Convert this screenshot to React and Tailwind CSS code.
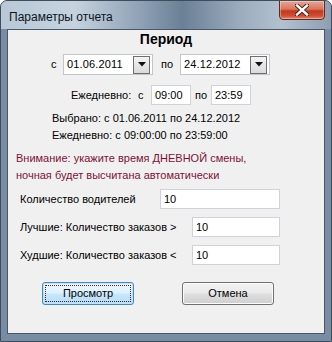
import React from 'react';

const font = { fontFamily: '"Liberation Sans", Arial, sans-serif' };

function DateBox({ value }) {
  return (
    <div className="flex h-[21px] w-[90px] items-center border border-[#c2c6cc] bg-white pl-[3px] pr-[2px]">
      <span className="flex-1 text-[11px] tracking-[0.15px] text-black">{value}</span>
      <div className="flex h-[18px] w-[17px] items-center justify-center border border-[#6f6f6f] bg-gradient-to-b from-[#f4f4f4] to-[#dadada]">
        <svg width="8" height="5" viewBox="0 0 8 5">
          <path d="M0 0h8L4 4.5z" fill="#111" />
        </svg>
      </div>
    </div>
  );
}

function Field({ value, width }) {
  return (
    <div className={`flex h-[20px] items-center border border-[#cfd3d9] bg-white pl-[3px] text-[11px] text-black ${width}`}>
      {value}
    </div>
  );
}

export default function App() {
  return (
    <div
      style={font}
      className="flex h-[342px] w-[332px] flex-col overflow-hidden rounded-t-[7px] border border-[#3f4c5a] bg-[#788ca3] text-[11px] text-black"
    >
      {/* Title bar */}
      <div className="relative h-[28px] shrink-0 bg-[linear-gradient(to_right,#b8c8d7_0%,#c6d3df_22%,#8fa2b6_42%,#6b8096_55%,#9aabbd_72%,#b3c1cf_85%,#8d9fb3_100%)]">
        <span className="absolute left-[8px] top-[7px] text-[12px] text-[#0b1520]">Параметры отчета</span>
        <div className="absolute right-[6px] top-[-1px] flex h-[20px] w-[46px] items-center justify-center rounded-b-[4px] border border-[#5e2a22] bg-[linear-gradient(to_bottom,#e9a593_0%,#d9765f_45%,#c2391f_55%,#cf4a30_80%,#e0846b_100%)] shadow-[inset_0_0_0_1px_rgba(255,255,255,0.35)]">
          <svg width="14" height="12" viewBox="0 0 14 12">
            <path d="M2 1.5L12 10.5M12 1.5L2 10.5" stroke="#3a1a16" strokeWidth="4.2" strokeLinecap="square" />
            <path d="M2 1.5L12 10.5M12 1.5L2 10.5" stroke="#ffffff" strokeWidth="2.4" strokeLinecap="square" />
          </svg>
        </div>
      </div>

      {/* Client area */}
      <div className="flex flex-1 px-[6px] pb-[7px]">
        <div className="flex flex-1 flex-col border border-[#4a5866] bg-[#f0f0f0]">
          <div className="flex h-[18px] items-center justify-center pt-[1px] text-[14px] font-bold">Период</div>

          <div className="ml-[43px] mt-[6px] flex items-center">
            <span className="w-[12px]">с</span>
            <DateBox value="01.06.2011" />
            <span className="ml-[8px] w-[19px]">по</span>
            <DateBox value="24.12.2012" />
          </div>

          <div className="ml-[63px] mt-[10px] flex items-center">
            <span className="w-[67px]">Ежедневно:</span>
            <span className="w-[13px]">с</span>
            <Field value="09:00" width="w-[40px]" />
            <span className="ml-[4px] w-[16px]">по</span>
            <Field value="23:59" width="w-[40px]" />
          </div>

          <div className="ml-[44px] mt-[5px] h-[17px] leading-[17px]">Выбрано: с 01.06.2011 по 24.12.2012</div>
          <div className="ml-[44px] h-[17px] leading-[17px]">Ежедневно: с 09:00:00 по 23:59:00</div>

          <div className="ml-[8px] mt-[6px] text-[#7f1137] leading-[17px]">
            <div>Внимание: укажите время ДНЕВНОЙ смены,</div>
            <div>ночная будет высчитана автоматически</div>
          </div>

          <div className="ml-[12px] mt-[5px] flex items-center">
            <span className="w-[140px]">Количество водителей</span>
            <Field value="10" width="w-[120px]" />
          </div>
          <div className="ml-[12px] mt-[8px] flex items-center">
            <span className="w-[172px]">Лучшие: Количество заказов &gt;</span>
            <Field value="10" width="w-[88px]" />
          </div>
          <div className="ml-[12px] mt-[8px] flex items-center">
            <span className="w-[172px]">Худшие: Количество заказов &lt;</span>
            <Field value="10" width="w-[88px]" />
          </div>

          <div className="ml-[34px] mt-[17px] flex gap-[48px]">
            <button className="flex h-[23px] w-[92px] items-center justify-center rounded-[3px] border border-[#3c8bc7] bg-[linear-gradient(to_bottom,#edf7fd_0%,#e0f1fc_45%,#c6e7fb_55%,#b3dcf6_100%)] p-[2px] shadow-[inset_0_0_0_1px_#bde6fd]">
              <span className="flex h-full w-full items-center justify-center border border-dotted border-[#5a1a1a]">Просмотр</span>
            </button>
            <button className="flex h-[23px] w-[92px] items-center justify-center rounded-[3px] border border-[#707070] bg-[linear-gradient(to_bottom,#f2f2f2_0%,#ebebeb_45%,#dddddd_55%,#cfcfcf_100%)] shadow-[inset_0_0_0_1px_#fcfcfc]">
              Отмена
            </button>
          </div>
        </div>
      </div>
    </div>
  );
}
